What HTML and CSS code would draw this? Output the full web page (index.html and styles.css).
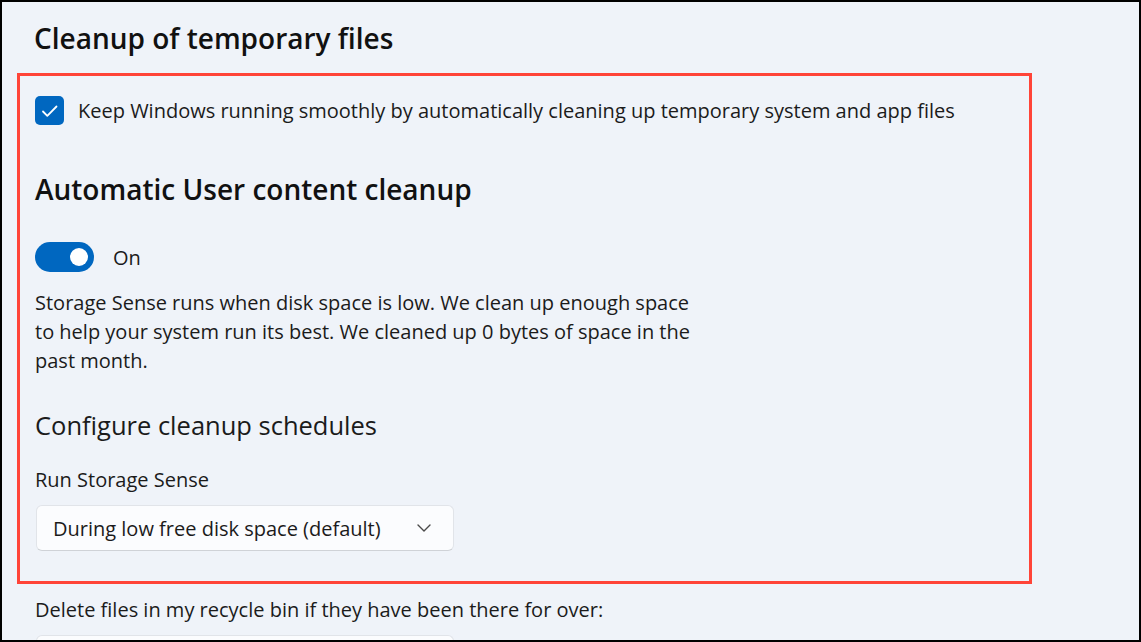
FILE: index.html
```html
<!DOCTYPE html>
<html lang="en">
<head>
	<meta charset="UTF-8">
	<title>Storage Sense</title>
	<link rel="stylesheet" href="styles.css">
</head>
<body>
	<div class="frame">
		<h1 class="title">Cleanup of temporary files</h1>

		<div class="highlight">
			<div class="check-row">
				<span class="checkbox">
					<svg width="29" height="29" viewBox="0 0 29 29"><path d="M8 15.5 L12.3 19.8 L21.5 10.5" fill="none" stroke="#fff" stroke-width="1.8" stroke-linecap="round" stroke-linejoin="round"/></svg>
				</span>
				<span class="check-text">Keep Windows running smoothly by automatically cleaning up temporary system and app files</span>
			</div>

			<h2 class="heading">Automatic User content cleanup</h2>

			<div class="toggle-row">
				<span class="toggle"><span class="knob"></span></span>
				<span class="toggle-text">On</span>
			</div>

			<p class="desc">Storage Sense runs when disk space is low. We clean up enough space to help your system run its best. We cleaned up 0 bytes of space in the past month.</p>

			<h3 class="subheading">Configure cleanup schedules</h3>

			<div class="label">Run Storage Sense</div>
			<div class="select">
				<span>During low free disk space (default)</span>
				<svg class="chev" width="14" height="8" viewBox="0 0 14 8"><path d="M1 1 L7 7 L13 1" fill="none" stroke="#4a4a4a" stroke-width="1.4" stroke-linecap="round" stroke-linejoin="round"/></svg>
			</div>
		</div>

		<div class="label after">Delete files in my recycle bin if they have been there for over:</div>
		<div class="select after-select"></div>
	</div>
</body>
</html>
```

FILE: styles.css
```css
*{
	margin: 0;
	padding: 0;
	box-sizing: border-box;
}
body{
	font-family: "Open Sans", "Noto Sans", sans-serif;
	color: #1b1b1b;
}
.frame{
	width: 1141px;
	height: 642px;
	border: 2px solid #000;
	background: #eff3f9;
	overflow: hidden;
}
.title{
	margin: 16px 0 0 32px;
	font-size: 28px;
	line-height: 40px;
	font-weight: 600;
	color: #111;
}
.highlight{
	margin: 15px 0 0 15px;
	width: 1015px;
	height: 511px;
	border: 3px solid #ff4438;
	padding: 20px 0 0 15px;
}
.check-row{
	display: flex;
	align-items: center;
	gap: 14px;
	height: 29px;
}
.checkbox{
	width: 29px;
	height: 29px;
	border-radius: 5px;
	background: #0067c0;
	display: block;
}
.checkbox svg{
	display: block;
}
.check-text{
	font-size: 20px;
}
.heading{
	margin-top: 46px;
	font-size: 28px;
	line-height: 36px;
	font-weight: 600;
	color: #111;
}
.toggle-row{
	margin-top: 35px;
	display: flex;
	align-items: center;
	gap: 19px;
}
.toggle{
	width: 59px;
	height: 30px;
	border-radius: 15px;
	background: #0067c0;
	position: relative;
}
.toggle .knob{
	position: absolute;
	left: 35px;
	top: 6px;
	width: 18px;
	height: 18px;
	border-radius: 50%;
	background: #fff;
}
.toggle-text{
	font-size: 20px;
}
.desc{
	margin-top: 16px;
	width: 670px;
	font-size: 20px;
	line-height: 29px;
}
.subheading{
	margin-top: 33px;
	font-size: 25.5px;
	line-height: 34px;
	font-weight: 400;
}
.label{
	margin-top: 24px;
	font-size: 20px;
	line-height: 28px;
}
.select{
	margin-top: 11px;
	margin-left: 1px;
	width: 418px;
	height: 46px;
	background: #fbfcfe;
	border: 1px solid #e1e4e9;
	border-bottom-color: #cfd2d7;
	border-radius: 6px;
	display: flex;
	align-items: center;
	justify-content: space-between;
	padding: 0 22px 0 16px;
	font-size: 20px;
}
.chev{
	display: block;
}
.label.after{
	margin: 12px 0 0 33px;
}
.after-select{
	margin: 11px 0 0 34px;
}
```
